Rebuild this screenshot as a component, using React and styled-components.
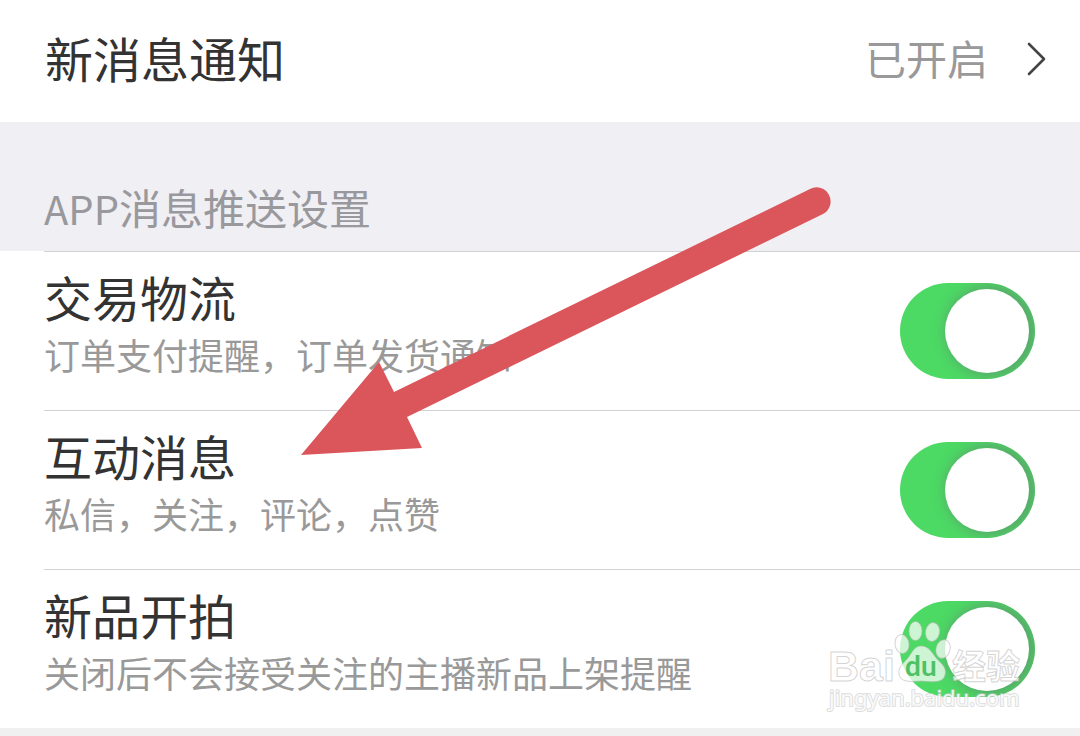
import React, { useState } from 'react';
import styled, { createGlobalStyle } from 'styled-components';

const GlobalStyle = createGlobalStyle`
  * {
    box-sizing: border-box;
  }
  body {
    margin: 0;
    background: #f0f0f0;
    color: #333;
    font-family: "Noto Sans CJK SC", "Noto Sans", sans-serif;
  }
  h2, p {
    margin: 0;
    font-weight: 400;
  }
`

const Page = styled.main`
  position: relative;
  overflow: hidden;
`

const StatusRow = styled.button`
  display: flex;
  align-items: center;
  width: 100%;
  height: 122px;
  padding: 0 34px 8px 45px;
  border: 0;
  background: #fff;
  color: inherit;
  font-family: inherit;
  text-align: left;
  cursor: pointer;
`

const RowTitle = styled.span`
  display: block;
  font-size: 48px;
  line-height: 64px;
`

const StatusValue = styled.span`
  margin-left: auto;
  margin-right: 38px;
  color: #999;
  font-size: 41px;
  line-height: 64px;
`

const Chevron = styled.svg`
  flex: none;
  margin-top: 4px;
`

const SectionTitle = styled.h2`
  padding: 53px 44px 12px;
  background: #efeff4;
  color: #98989d;
  font-size: 42px;
  line-height: 64px;
`

const Latin = styled.span`
  font-size: 40px;
  line-height: 1;
`

const List = styled.div`
  background: #fff;
`

const Row = styled.label`
  display: flex;
  align-items: center;
  justify-content: space-between;
  margin-left: 44px;
  padding: 12px 45px 30px 0;
  border-top: 1px solid #d0d2d3;
  cursor: pointer;
`

const RowDesc = styled.span`
  display: block;
  color: #999;
  font-size: 36px;
  line-height: 52px;
`

const Switch = styled.input`
  appearance: none;
  position: relative;
  flex: none;
  width: 135px;
  height: 96px;
  margin: 17px 0 0;
  border-radius: 48px;
  background: ${(props) => (props.checked ? '#4cd964' : '#ddd')};
  overflow: hidden;
  cursor: pointer;
  &::before {
    content: '';
    position: absolute;
    top: 6px;
    left: ${(props) => (props.checked ? '45px' : '6px')};
    width: 84px;
    height: 84px;
    border-radius: 50%;
    background: #fff;
    box-shadow: 4px 0 12px 4px rgba(95, 145, 110, 0.65);
  }
`

const Arrow = styled.svg`
  position: absolute;
  top: 180px;
  left: 296px;
  pointer-events: none;
`

const Watermark = styled.svg`
  position: absolute;
  top: 614px;
  right: 50px;
  pointer-events: none;
`

const items = [
  { id: 'trade', title: '交易物流', desc: '订单支付提醒，订单发货通知' },
  { id: 'message', title: '互动消息', desc: '私信，关注，评论，点赞' },
  { id: 'newitem', title: '新品开拍', desc: '关闭后不会接受关注的主播新品上架提醒' },
]

export default function App() {
  const [enabled, setEnabled] = useState({ trade: true, message: true, newitem: true })

  const onToggle = (id) => {
    setEnabled({ ...enabled, [id]: !enabled[id] })
  }

  return (
    <Page>
      <GlobalStyle />
      <StatusRow type='button'>
        <RowTitle>新消息通知</RowTitle>
        <StatusValue>已开启</StatusValue>
        <Chevron width='20' height='34' viewBox='0 0 20 34' fill='none'>
          <path d='M3 2L18 17L3 32' stroke='#444' strokeWidth='2.600' strokeLinecap='round' strokeLinejoin='round' />
        </Chevron>
      </StatusRow>

      <SectionTitle><Latin>APP</Latin>消息推送设置</SectionTitle>

      <List>
        {items.map((item) => (
          <Row key={item.id}>
            <span>
              <RowTitle>{item.title}</RowTitle>
              <RowDesc>{item.desc}</RowDesc>
            </span>
            <Switch type='checkbox' role='switch' checked={enabled[item.id]} onChange={() => onToggle(item.id)} />
          </Row>
        ))}
      </List>

      <Arrow width='540' height='284' viewBox='296 180 540 284'>
        <path d='M301 455L379 362L394 392L810 189A14 14 0 0 1 823 214L407 417L422 448Z' fill='#db565b' />
      </Arrow>

      <Watermark width='204' height='104' viewBox='826 614 204 104'>
        <g fill='#fff' fillOpacity='0.72' stroke='#b8b8b8' strokeOpacity='0.6' strokeWidth='1' strokeLinejoin='round'>
          <text x='828' y='681' fontFamily='Liberation Sans' fontWeight='700' fontSize='43'>Bai</text>
          <ellipse cx='902' cy='644' rx='7' ry='9.500' transform='rotate(-8 902 644)' />
          <ellipse cx='915.500' cy='631' rx='6.500' ry='9.500' />
          <ellipse cx='932.500' cy='632' rx='7' ry='9.500' transform='rotate(10 932.500 632)' />
          <ellipse cx='943' cy='649' rx='7' ry='9.500' transform='rotate(15 943 649)' />
          <path d='M921 646C929 646 932 653 937 659C942 664 947 668 945 675C943 683 934 682 921 681C909 682 900 682 899 674C898 667 903 664 908 658C912 653 914 646 921 646Z' />
          <text x='952' y='679' fontWeight='700' fontSize='34'>经验</text>
        </g>
        {/* soft grey rim under the white address */}
        <text x='829' y='706' fontFamily='Noto Sans' fontSize='22' fill='#fff' fillOpacity='0.85' stroke='#c8c8c8' strokeOpacity='0.6' strokeWidth='2' paintOrder='stroke' strokeLinejoin='round'>jingyan.baidu.com</text>
        <text x='905' y='676' fontFamily='Lato' fontWeight='700' fontSize='28' fill='#4fc064'>du</text>
      </Watermark>
    </Page>
  )
}
